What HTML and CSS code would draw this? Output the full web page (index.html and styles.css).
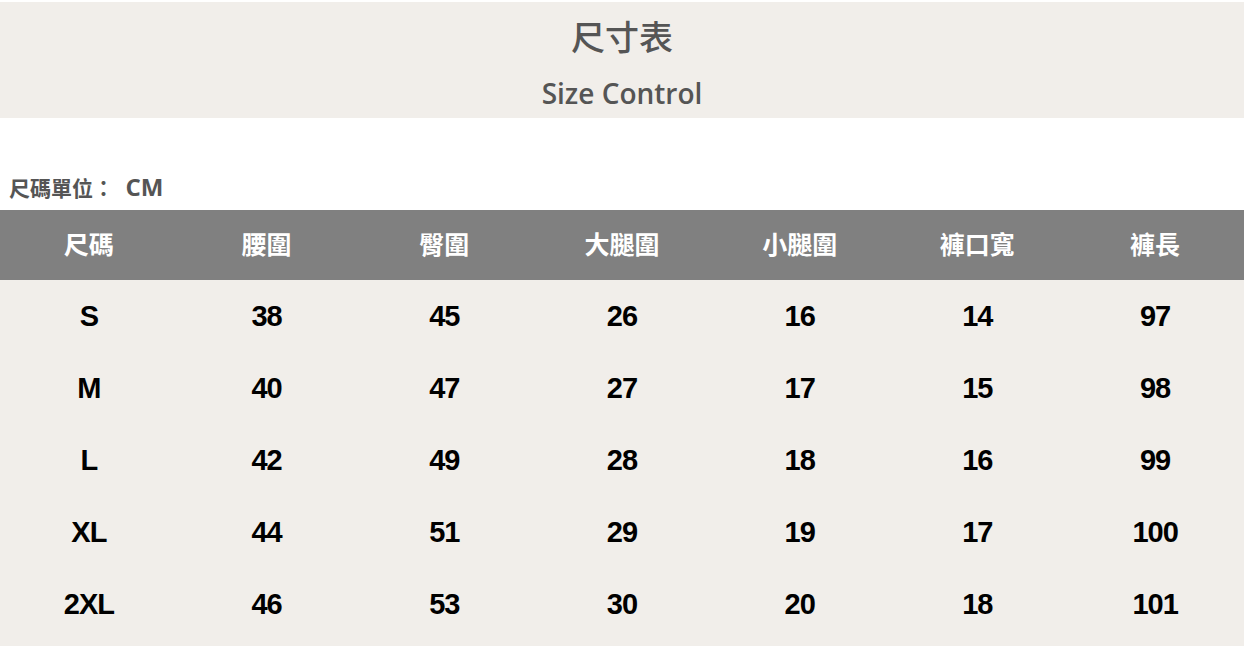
FILE: index.html
```html
<!DOCTYPE html>
<html lang="zh-Hant">
<head>
<meta charset="utf-8">
<title>尺寸表</title>
<link rel="stylesheet" href="styles.css">
</head>
<body>
<header class="banner">
  <h1 class="title">尺寸表</h1>
  <p class="subtitle">Size Control</p>
</header>
<p class="unit">尺碼單位： <span class="unit-cm">CM</span></p>
<div class="table-wrap">
<table class="size-table">
  <thead>
    <tr><th>尺碼</th><th>腰圍</th><th>臀圍</th><th>大腿圍</th><th>小腿圍</th><th>褲口寬</th><th>褲長</th></tr>
  </thead>
  <tbody>
    <tr><td>S</td><td>38</td><td>45</td><td>26</td><td>16</td><td>14</td><td>97</td></tr>
    <tr><td>M</td><td>40</td><td>47</td><td>27</td><td>17</td><td>15</td><td>98</td></tr>
    <tr><td>L</td><td>42</td><td>49</td><td>28</td><td>18</td><td>16</td><td>99</td></tr>
    <tr><td>XL</td><td>44</td><td>51</td><td>29</td><td>19</td><td>17</td><td>100</td></tr>
    <tr><td>2XL</td><td>46</td><td>53</td><td>30</td><td>20</td><td>18</td><td>101</td></tr>
  </tbody>
</table>
</div>
</body>
</html>
```
FILE: styles.css
```css
html, body {
  margin: 0;
  padding: 0;
  background: #ffffff;
}
body {
  font-family: "Open Sans", "Noto Sans CJK TC", sans-serif;
  padding-top: 2px;
}
.banner {
  background: #f1eeea;
  height: 116px;
  display: flex;
  flex-direction: column;
  align-items: center;
  color: #555555;
}
.title {
  margin: 12px 0 0;
  font-size: 34px;
  font-weight: 500;
  line-height: 44px;
  font-family: "Noto Sans CJK TC", sans-serif;
}
.subtitle {
  margin: 16px 0 0;
  font-size: 28px;
  font-weight: 600;
  line-height: 38px;
}
.unit {
  margin: 55px 0 0 9px;
  height: 37px;
  font-size: 21px;
  font-weight: 700;
  line-height: 28px;
  color: #555555;
  font-family: "Open Sans", "Noto Sans CJK TC", sans-serif;
}
.unit-cm {
  font-size: 24px;
  margin-left: 6px;
}
.table-wrap {
  background: #f1eeea;
  padding-bottom: 10px;
}
.size-table {
  width: 100%;
  border-collapse: collapse;
  table-layout: fixed;
}
.size-table th {
  background: #808080;
  color: #ffffff;
  height: 65px;
  padding: 0 0 5px;
  font-size: 25px;
  font-weight: 700;
  font-family: "Noto Sans CJK TC", sans-serif;
  text-align: center;
}
.size-table td {
  height: 72px;
  padding: 0;
  text-align: center;
  font-family: "Liberation Sans", sans-serif;
  font-weight: 700;
  font-size: 29px;
  color: #000000;
  letter-spacing: -1px;
}
```
